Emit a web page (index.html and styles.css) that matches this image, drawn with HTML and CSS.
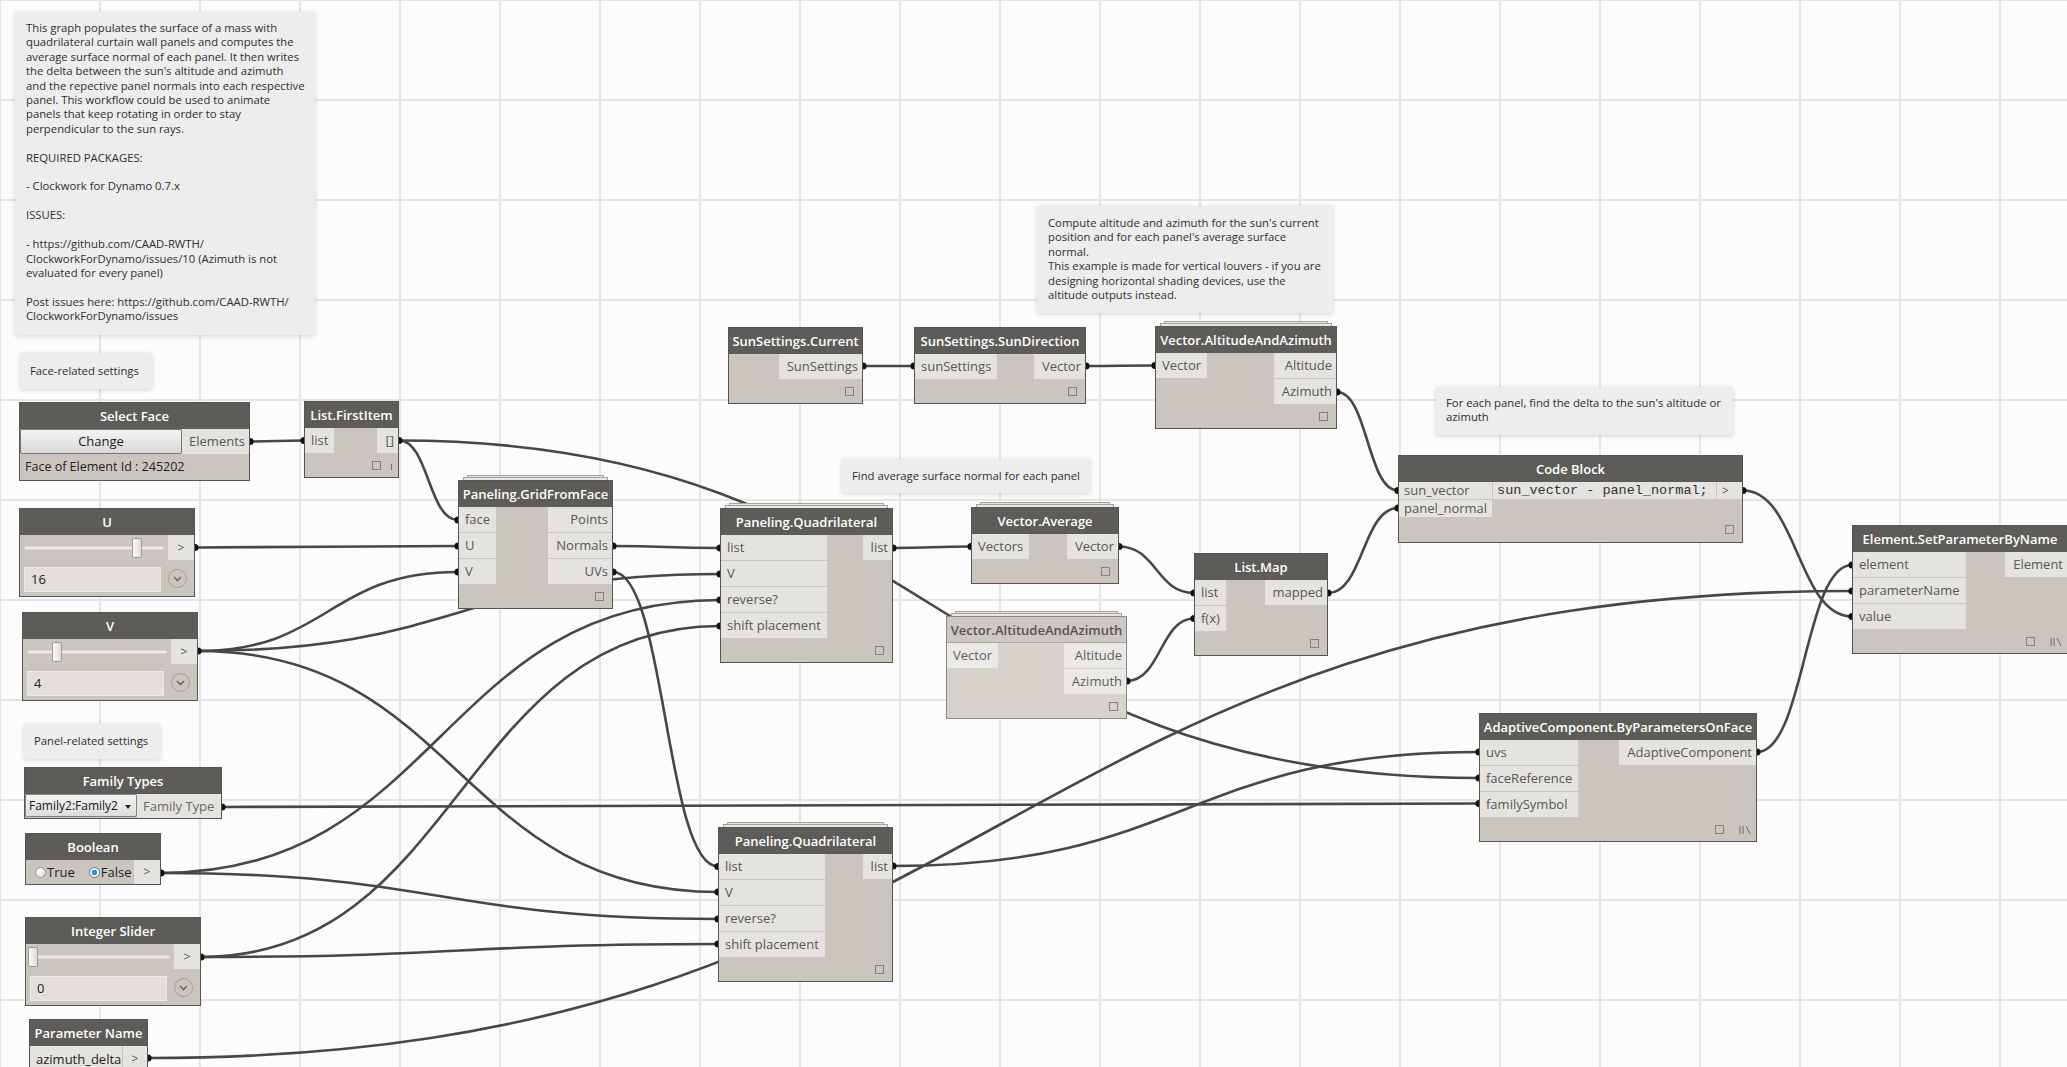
FILE: index.html
```html
<!DOCTYPE html>
<html>
<head>
<meta charset="utf-8">
<title>Dynamo graph</title>
<link rel="stylesheet" href="styles.css">
</head>
<body>
<div class="canvas">
  <svg class="wires" width="2067" height="1067" viewBox="0 0 2067 1067">
    <g fill="none" stroke="#474747" stroke-width="2.6">
      <path d="M250 441.5 C277 441.5 277 440.5 304 440.5"/>
      <path d="M399 440.5 C428.5 440.5 428.5 520 458 520"/>
      <path d="M399 440.5 C939 440.5 939 778 1479 778"/>
      <path d="M195 547.5 C326.5 547.5 326.5 546 458 546"/>
      <path d="M198 651 C328 651 328 572 458 572"/>
      <path d="M198 651 C459 651 459 574 720 574"/>
      <path d="M198 651 C458 651 458 892 718 892"/>
      <path d="M613 546 C666.5 546 666.5 548 720 548"/>
      <path d="M613 572 C665.5 572 665.5 866.5 718 866.5"/>
      <path d="M893 548 C932 548 932 546.5 971 546.5"/>
      <path d="M863 366 L914 366"/>
      <path d="M1086 366 C1120 366 1120 365.5 1155 365.5"/>
      <path d="M1119 546.5 C1156.5 546.5 1156.5 593 1194 593"/>
      <path d="M1127 681 C1160.5 681 1160.5 618.5 1194 618.5"/>
      <path d="M1328 593 C1363 593 1363 508 1398 508"/>
      <path d="M1337 392 C1367.5 392 1367.5 490.5 1398 490.5"/>
      <path d="M1743 490.5 C1797.5 490.5 1797.5 616.5 1852 616.5"/>
      <path d="M1757 752 C1804.5 752 1804.5 565 1852 565"/>
      <path d="M148 1058 C1000 1058 1000 591 1852 591"/>
      <path d="M222 807 C850.5 807 850.5 803.5 1479 803.5"/>
      <path d="M161 873 C440.5 873 440.5 600 720 600"/>
      <path d="M161 873 C439.5 873 439.5 919 718 919"/>
      <path d="M201 957 C460.5 957 460.5 626 720 626"/>
      <path d="M201 957 C459.5 957 459.5 944 718 944"/>
      <path d="M893 866 C1186 866 1186 752 1479 752"/>
    </g>
    <g fill="#111">
      <circle cx="250" cy="441.5" r="3.6"/><circle cx="304" cy="440.5" r="3.6"/>
      <circle cx="399" cy="440.5" r="3.6"/><circle cx="458" cy="520" r="3.6"/>
      <circle cx="195" cy="547.5" r="3.6"/><circle cx="458" cy="546" r="3.6"/>
      <circle cx="198" cy="651" r="3.6"/><circle cx="458" cy="572" r="3.6"/>
      <circle cx="720" cy="574" r="3.6"/><circle cx="718" cy="892" r="3.6"/>
      <circle cx="613" cy="546" r="3.6"/><circle cx="720" cy="548" r="3.6"/>
      <circle cx="613" cy="572" r="3.6"/><circle cx="718" cy="866.5" r="3.6"/>
      <circle cx="893" cy="548" r="3.6"/><circle cx="971" cy="546.5" r="3.6"/>
      <circle cx="863" cy="366" r="3.6"/><circle cx="914" cy="366" r="3.6"/>
      <circle cx="1086" cy="366" r="3.6"/><circle cx="1155" cy="365.5" r="3.6"/>
      <circle cx="1119" cy="546.5" r="3.6"/><circle cx="1194" cy="593" r="3.6"/>
      <circle cx="1127" cy="681" r="3.6"/><circle cx="1194" cy="618.5" r="3.6"/>
      <circle cx="1328" cy="593" r="3.6"/><circle cx="1398" cy="508" r="3.6"/>
      <circle cx="1337" cy="392" r="3.6"/><circle cx="1398" cy="490.5" r="3.6"/>
      <circle cx="1743" cy="490.5" r="3.6"/><circle cx="1852" cy="616.5" r="3.6"/>
      <circle cx="1757" cy="752" r="3.6"/><circle cx="1852" cy="565" r="3.6"/>
      <circle cx="148" cy="1058" r="3.6"/><circle cx="1852" cy="591" r="3.6"/>
      <circle cx="222" cy="807" r="3.6"/><circle cx="1479" cy="803.5" r="3.6"/>
      <circle cx="161" cy="873" r="3.6"/><circle cx="720" cy="600" r="3.6"/>
      <circle cx="718" cy="919" r="3.6"/><circle cx="201" cy="957" r="3.6"/>
      <circle cx="720" cy="626" r="3.6"/><circle cx="718" cy="944" r="3.6"/>
      <circle cx="893" cy="866" r="3.6"/><circle cx="1479" cy="752" r="3.6"/>
      <circle cx="1479" cy="778" r="3.6"/>
    </g>
  </svg>

  <!-- Notes -->
  <div class="note note-main">This graph populates the surface of a mass with
quadrilateral curtain wall panels and computes the
average surface normal of each panel. It then writes
the delta between the sun's altitude and azimuth
and the repective panel normals into each respective
panel. This workflow could be used to animate
panels that keep rotating in order to stay
perpendicular to the sun rays.

REQUIRED PACKAGES:

- Clockwork for Dynamo 0.7.x

ISSUES:

- https://github.com/CAAD-RWTH/
ClockworkForDynamo/issues/10 (Azimuth is not
evaluated for every panel)

Post issues here: https://github.com/CAAD-RWTH/
ClockworkForDynamo/issues</div>
  <div class="note note-one note-face">Face-related settings</div>
  <div class="note note-one note-panel">Panel-related settings</div>
  <div class="note note-compute">Compute altitude and azimuth for the sun's current
position and for each panel's average surface
normal.
This example is made for vertical louvers - if you are
designing horizontal shading devices, use the
altitude outputs instead.</div>
  <div class="note note-each">For each panel, find the delta to the sun's altitude or
azimuth</div>
  <div class="note note-one note-find">Find average surface normal for each panel</div>

  <!-- Select Face -->
  <div class="node n-select">
    <div class="hdr">Select Face</div>
    <div class="row">
      <div class="btn">Change</div>
      <div class="port grow">Elements</div>
    </div>
    <div class="info">Face of Element Id : 245202</div>
  </div>

  <!-- List.FirstItem -->
  <div class="node n-first">
    <div class="hdr">List.FirstItem</div>
    <div class="io">
      <div class="ins"><div class="port">list</div></div>
      <div class="outs"><div class="port">[]</div></div>
    </div>
    <div class="foot"><span class="sq sq-left"></span><span class="bar"></span></div>
  </div>

  <!-- U slider -->
  <div class="node slider n-u">
    <div class="hdr">U</div>
    <div class="srow">
      <div class="track"><span class="thumb" style="left:107px"></span></div>
      <div class="port gt">&gt;</div>
    </div>
    <div class="vrow">
      <div class="vbox">16</div>
      <span class="circ"><svg width="9" height="6" viewBox="0 0 9 6"><path d="M1 1 L4.5 4.5 L8 1" fill="none" stroke="#6e6b66" stroke-width="1.6"/></svg></span>
    </div>
  </div>

  <!-- V slider -->
  <div class="node slider n-v">
    <div class="hdr">V</div>
    <div class="srow">
      <div class="track"><span class="thumb" style="left:24px"></span></div>
      <div class="port gt">&gt;</div>
    </div>
    <div class="vrow">
      <div class="vbox">4</div>
      <span class="circ"><svg width="9" height="6" viewBox="0 0 9 6"><path d="M1 1 L4.5 4.5 L8 1" fill="none" stroke="#6e6b66" stroke-width="1.6"/></svg></span>
    </div>
  </div>

  <!-- Family Types -->
  <div class="node n-family">
    <div class="hdr">Family Types</div>
    <div class="row">
      <div class="dropdown"><span>Family2:Family2</span><span class="caret"></span></div>
      <div class="port grow">Family Type</div>
    </div>
  </div>

  <!-- Boolean -->
  <div class="node n-bool">
    <div class="hdr">Boolean</div>
    <div class="row brow">
      <span class="radio"></span><span class="rlabel">True</span>
      <span class="radio on"></span><span class="rlabel">False</span>
      <div class="port gt">&gt;</div>
    </div>
  </div>

  <!-- Integer Slider -->
  <div class="node slider n-int">
    <div class="hdr">Integer Slider</div>
    <div class="srow">
      <div class="track"><span class="thumb" style="left:-3px"></span></div>
      <div class="port gt">&gt;</div>
    </div>
    <div class="vrow">
      <div class="vbox">0</div>
      <span class="circ"><svg width="9" height="6" viewBox="0 0 9 6"><path d="M1 1 L4.5 4.5 L8 1" fill="none" stroke="#6e6b66" stroke-width="1.6"/></svg></span>
    </div>
  </div>

  <!-- Parameter Name -->
  <div class="node n-param">
    <div class="hdr">Parameter Name</div>
    <div class="row">
      <div class="tbox">azimuth_delta</div>
      <div class="port gt">&gt;</div>
    </div>
  </div>

  <!-- Paneling.GridFromFace -->
  <div class="node stacked n-grid">
    <div class="hdr">Paneling.GridFromFace</div>
    <div class="io">
      <div class="ins"><div class="port">face</div><div class="port">U</div><div class="port">V</div></div>
      <div class="outs"><div class="port">Points</div><div class="port">Normals</div><div class="port">UVs</div></div>
    </div>
    <div class="foot"><span class="sq"></span></div>
  </div>

  <!-- Paneling.Quadrilateral (top) -->
  <div class="node stacked n-quad1">
    <div class="hdr">Paneling.Quadrilateral</div>
    <div class="io">
      <div class="ins"><div class="port">list</div><div class="port">V</div><div class="port">reverse?</div><div class="port">shift placement</div></div>
      <div class="outs"><div class="port">list</div></div>
    </div>
    <div class="foot"><span class="sq"></span></div>
  </div>

  <!-- Paneling.Quadrilateral (bottom) -->
  <div class="node stacked n-quad2">
    <div class="hdr">Paneling.Quadrilateral</div>
    <div class="io">
      <div class="ins"><div class="port">list</div><div class="port">V</div><div class="port">reverse?</div><div class="port">shift placement</div></div>
      <div class="outs"><div class="port">list</div></div>
    </div>
    <div class="foot"><span class="sq"></span></div>
  </div>

  <!-- SunSettings.Current -->
  <div class="node n-sun">
    <div class="hdr">SunSettings.Current</div>
    <div class="io">
      <div class="ins"></div>
      <div class="outs"><div class="port">SunSettings</div></div>
    </div>
    <div class="foot"><span class="sq"></span></div>
  </div>

  <!-- SunSettings.SunDirection -->
  <div class="node n-sundir">
    <div class="hdr">SunSettings.SunDirection</div>
    <div class="io">
      <div class="ins"><div class="port">sunSettings</div></div>
      <div class="outs"><div class="port">Vector</div></div>
    </div>
    <div class="foot"><span class="sq"></span></div>
  </div>

  <!-- Vector.AltitudeAndAzimuth (top) -->
  <div class="node stacked n-alt1">
    <div class="hdr">Vector.AltitudeAndAzimuth</div>
    <div class="io">
      <div class="ins"><div class="port">Vector</div></div>
      <div class="outs"><div class="port">Altitude</div><div class="port">Azimuth</div></div>
    </div>
    <div class="foot"><span class="sq"></span></div>
  </div>

  <!-- Vector.Average -->
  <div class="node stacked n-avg">
    <div class="hdr">Vector.Average</div>
    <div class="io">
      <div class="ins"><div class="port">Vectors</div></div>
      <div class="outs"><div class="port">Vector</div></div>
    </div>
    <div class="foot"><span class="sq"></span></div>
  </div>

  <!-- Vector.AltitudeAndAzimuth (lower, dimmed) -->
  <div class="node stacked dim n-alt2">
    <div class="hdr">Vector.AltitudeAndAzimuth</div>
    <div class="io">
      <div class="ins"><div class="port">Vector</div></div>
      <div class="outs"><div class="port">Altitude</div><div class="port">Azimuth</div></div>
    </div>
    <div class="foot"><span class="sq"></span></div>
  </div>

  <!-- List.Map -->
  <div class="node n-map">
    <div class="hdr">List.Map</div>
    <div class="io">
      <div class="ins"><div class="port">list</div><div class="port">f(x)</div></div>
      <div class="outs"><div class="port">mapped</div></div>
    </div>
    <div class="foot"><span class="sq"></span></div>
  </div>

  <!-- Code Block -->
  <div class="node n-code">
    <div class="hdr">Code Block</div>
    <div class="cb">
      <div class="ins small"><div class="port">sun_vector</div><div class="port">panel_normal</div></div>
      <div class="code">sun_vector - panel_normal;</div>
      <div class="port cbout">&gt;</div>
    </div>
    <div class="foot cbfoot"><span class="sq"></span></div>
  </div>

  <!-- Element.SetParameterByName -->
  <div class="node n-elem">
    <div class="hdr">Element.SetParameterByName</div>
    <div class="io">
      <div class="ins"><div class="port">element</div><div class="port">parameterName</div><div class="port">value</div></div>
      <div class="outs"><div class="port">Element</div></div>
    </div>
    <div class="foot"><span class="sq sq-lace"></span><svg class="lace" width="12" height="10" viewBox="0 0 12 10"><path d="M1 1 V9 M4 1 V9 M7 1 L11 9" stroke="#6e6b66" stroke-width="1" fill="none"/></svg></div>
  </div>

  <!-- AdaptiveComponent.ByParametersOnFace -->
  <div class="node n-adapt">
    <div class="hdr">AdaptiveComponent.ByParametersOnFace</div>
    <div class="io">
      <div class="ins"><div class="port">uvs</div><div class="port">faceReference</div><div class="port">familySymbol</div></div>
      <div class="outs"><div class="port">AdaptiveComponent</div></div>
    </div>
    <div class="foot"><span class="sq sq-lace"></span><svg class="lace" width="12" height="10" viewBox="0 0 12 10"><path d="M1 1 V9 M4 1 V9 M7 1 L11 9" stroke="#6e6b66" stroke-width="1" fill="none"/></svg></div>
  </div>
</div>
</body>
</html>
```

FILE: styles.css
```css
html, body {
  margin: 0;
  padding: 0;
}
body {
  width: 2067px;
  height: 1067px;
  overflow: hidden;
  background-color: #fcfcfc;
  background-image:
    linear-gradient(to right, #e5e5e5 2px, transparent 2px),
    linear-gradient(to bottom, #e5e5e5 2px, transparent 2px);
  background-size: 100px 100px;
  background-position: -1px -1px;
  font-family: "Open Sans", "Noto Sans", sans-serif;
}
.canvas {
  position: relative;
  width: 2067px;
  height: 1067px;
}
.wires {
  position: absolute;
  left: 0;
  top: 0;
  z-index: 0;
}

/* ---------- notes ---------- */
.note {
  position: absolute;
  z-index: 1;
  box-sizing: border-box;
  background: #ededed;
  box-shadow: 0 1px 5px rgba(0, 0, 0, 0.16);
  border-radius: 2px;
  color: #2e2e2e;
  font-size: 11.3px;
  line-height: 14.4px;
  white-space: pre;
  padding: 9px 10px;
}
.note-one {
  display: flex;
  align-items: center;
  padding-top: 0;
  padding-bottom: 0;
}
.note-main { left: 15px; top: 12px; width: 300px; height: 323px; padding-left: 11px; }
.note-face { left: 20px; top: 353px; width: 132px; height: 36px; }
.note-panel { left: 24px; top: 724px; width: 136px; height: 35px; }
.note-compute { left: 1037px; top: 206px; width: 296px; height: 107px; padding-top: 10px; padding-left: 11px; }
.note-each { left: 1436px; top: 387px; width: 297px; height: 48px; padding-top: 9px; }
.note-find { left: 842px; top: 459px; width: 248px; height: 34px; }

/* ---------- nodes ---------- */
.node {
  position: absolute;
  z-index: 2;
  box-sizing: border-box;
  background: #cac6bf;
  border: 1px solid #57554f;
}
.hdr {
  height: 26px;
  background: #5e5c58;
  color: #fff;
  font-size: 13px;
  font-weight: 600;
  display: flex;
  align-items: center;
  justify-content: center;
  white-space: nowrap;
  overflow: hidden;
}
.io {
  display: flex;
  justify-content: space-between;
  align-items: flex-start;
}
.ins, .outs {
  display: flex;
  flex-direction: column;
  gap: 1px;
}
.port {
  height: 25px;
  line-height: 25px;
  padding: 0 6px;
  background: #e5e3df;
  color: #595754;
  font-size: 13px;
  white-space: nowrap;
  box-sizing: border-box;
}
.outs .port {
  text-align: right;
  padding: 0 4px 0 8px;
}
.foot {
  position: relative;
  height: 24px;
}
.sq {
  position: absolute;
  right: 8px;
  top: 8px;
  width: 9px;
  height: 9px;
  box-sizing: border-box;
  border: 1px solid #85827d;
}
.sq-left { right: 17px; }
.sq-lace { right: 32px; }
.bar {
  position: absolute;
  right: 6px;
  top: 11px;
  width: 1px;
  height: 6px;
  background: #6e6b66;
}
.lace {
  position: absolute;
  right: 5px;
  top: 8px;
}

/* stacked (replicated) nodes */
.stacked::before,
.stacked::after {
  content: "";
  position: absolute;
  box-sizing: border-box;
  background: #e9e7e3;
  border: 1px solid #a4a19b;
  border-bottom: none;
}
.stacked::before {
  left: 8px;
  right: 8px;
  top: -6px;
  height: 5px;
}
.stacked::after {
  left: 4px;
  right: 4px;
  top: -4px;
  height: 3px;
}

/* dimmed node */
.dim {
  background: #d6d3cd;
  border-color: #8d8a85;
}
.dim .hdr {
  background: #cdc9c2;
  color: #545454;
  border-bottom: 1px solid #a8a59f;
  box-sizing: border-box;
}
.dim .port {
  background: #ebe9e6;
  color: #5e5e5e;
}

/* positions on the canvas */
.n-select { left: 19px; top: 402px; width: 231px; }
.n-first { left: 304px; top: 401px; width: 95px; }
.n-u { left: 19px; top: 508px; width: 176px; }
.n-v { left: 22px; top: 612px; width: 176px; }
.n-family { left: 24px; top: 767px; width: 198px; }
.n-bool { left: 25px; top: 833px; width: 136px; }
.n-int { left: 25px; top: 917px; width: 176px; }
.n-param { left: 29px; top: 1019px; width: 119px; }
.n-grid { left: 458px; top: 480px; width: 155px; }
.n-quad1 { left: 720px; top: 508px; width: 173px; }
.n-quad2 { left: 718px; top: 827px; width: 175px; }
.n-sun { left: 728px; top: 327px; width: 135px; }
.n-sundir { left: 914px; top: 327px; width: 172px; }
.n-alt1 { left: 1155px; top: 326px; width: 182px; }
.n-avg { left: 971px; top: 507px; width: 148px; }
.n-alt2 { left: 946px; top: 616px; width: 181px; }
.n-map { left: 1194px; top: 553px; width: 134px; }
.n-code { left: 1398px; top: 455px; width: 345px; }
.n-elem { left: 1852px; top: 525px; width: 216px; }
.n-adapt { left: 1479px; top: 713px; width: 278px; }

/* generic one-line row */
.row {
  display: flex;
  height: 25px;
}
.grow {
  flex: 1;
}
.port.gt {
  width: 26px;
  padding: 0;
  text-align: center;
  margin-left: auto;
  font-size: 12px;
  color: #555;
}

/* Select Face */
.btn {
  width: 162px;
  height: 25px;
  box-sizing: border-box;
  border: 1px solid #7d7b78;
  border-radius: 2px;
  background: linear-gradient(#f3f3f3, #d9d9d9);
  color: #1c1c1c;
  font-size: 13px;
  line-height: 23px;
  text-align: center;
}
.n-select .port.grow {
  text-align: right;
  padding-right: 4px;
}
.info {
  height: 26px;
  line-height: 26px;
  padding-left: 5px;
  font-size: 12.5px;
  color: #222;
  white-space: nowrap;
}

/* sliders */
.srow {
  display: flex;
  align-items: center;
  height: 25px;
}
.track {
  position: relative;
  width: 140px;
  height: 4px;
  margin-left: 4px;
  box-sizing: border-box;
  background: #eeece9;
  border: 1px solid #d9d6d1;
  border-radius: 2px;
}
.thumb {
  position: absolute;
  top: -9px;
  width: 10px;
  height: 20px;
  box-sizing: border-box;
  border: 1px solid #9c9994;
  border-radius: 2px;
  background: linear-gradient(to right, #fbfbfb, #dedcd8);
}
.srow .port.gt {
  height: 25px;
}
.vrow {
  display: flex;
  align-items: flex-start;
  height: 36px;
  padding-top: 7px;
  box-sizing: border-box;
}
.vbox {
  width: 137px;
  height: 25px;
  margin-left: 4px;
  box-sizing: border-box;
  background: #e2dfda;
  border: 1px solid #ecebe8;
  line-height: 23px;
  padding-left: 6px;
  font-size: 13px;
  color: #222;
}
.circ {
  width: 19px;
  height: 19px;
  margin-left: 7px;
  margin-top: 2px;
  box-sizing: border-box;
  border: 1px solid #a39f99;
  border-radius: 50%;
  display: flex;
  align-items: center;
  justify-content: center;
  padding-top: 1px;
}

/* family types */
.n-family .row {
  height: 24px;
}
.dropdown {
  width: 112px;
  height: 23px;
  box-sizing: border-box;
  border: 1px solid #868480;
  border-radius: 2px;
  background: linear-gradient(#f4f4f4, #dcdcdc);
  color: #151515;
  font-size: 12px;
  line-height: 21px;
  padding-left: 3px;
  display: flex;
  align-items: center;
  white-space: nowrap;
}
.caret {
  margin-left: 7px;
  width: 0;
  height: 0;
  border-left: 3.5px solid transparent;
  border-right: 3.5px solid transparent;
  border-top: 4px solid #222;
  margin-top: 2px;
}
.n-family .port.grow {
  height: 24px;
  line-height: 25px;
  color: #6a6864;
  padding-left: 6px;
}

/* boolean */
.brow {
  height: 24px;
  align-items: center;
}
.radio {
  width: 11px;
  height: 11px;
  box-sizing: border-box;
  border: 1px solid #9a9894;
  border-radius: 50%;
  background: radial-gradient(circle at 40% 35%, #ffffff, #d8d8d8);
  margin-left: 9px;
}
.radio.on {
  margin-left: 14px;
  background: radial-gradient(circle, #2b8fd6 0 2.5px, #eaf4fb 3px);
  border-color: #5f7f99;
}
.n-bool .radio:first-child {
  margin-left: 9px;
}
.rlabel {
  font-size: 13px;
  color: #1e1e1e;
  margin-left: 1px;
}
.brow .port.gt {
  height: 24px;
  line-height: 24px;
}

/* parameter name */
.tbox {
  width: 92px;
  height: 25px;
  background: #e5e3df;
  color: #1c1c1c;
  font-size: 13px;
  line-height: 27px;
  padding-left: 6px;
  box-sizing: border-box;
  white-space: nowrap;
}
.n-param .port.gt {
  margin-left: 1px;
  flex: 1;
}

/* code block */
.cb {
  display: flex;
  align-items: flex-start;
}
.ins.small .port {
  height: 17px;
  line-height: 17px;
  padding: 0 5px;
}
.code {
  flex: 1;
  height: 17px;
  line-height: 17px;
  margin-left: 1px;
  padding-left: 4px;
  background: #e5e3df;
  color: #333;
  font-family: "Liberation Mono", "DejaVu Sans Mono", monospace;
  font-size: 13.5px;
  white-space: nowrap;
}
.port.cbout {
  height: 17px;
  line-height: 17px;
  width: 25px;
  margin-left: 1px;
  padding: 0 0 0 5px;
  font-size: 12px;
}
.cbfoot {
  height: 25px;
}
```
